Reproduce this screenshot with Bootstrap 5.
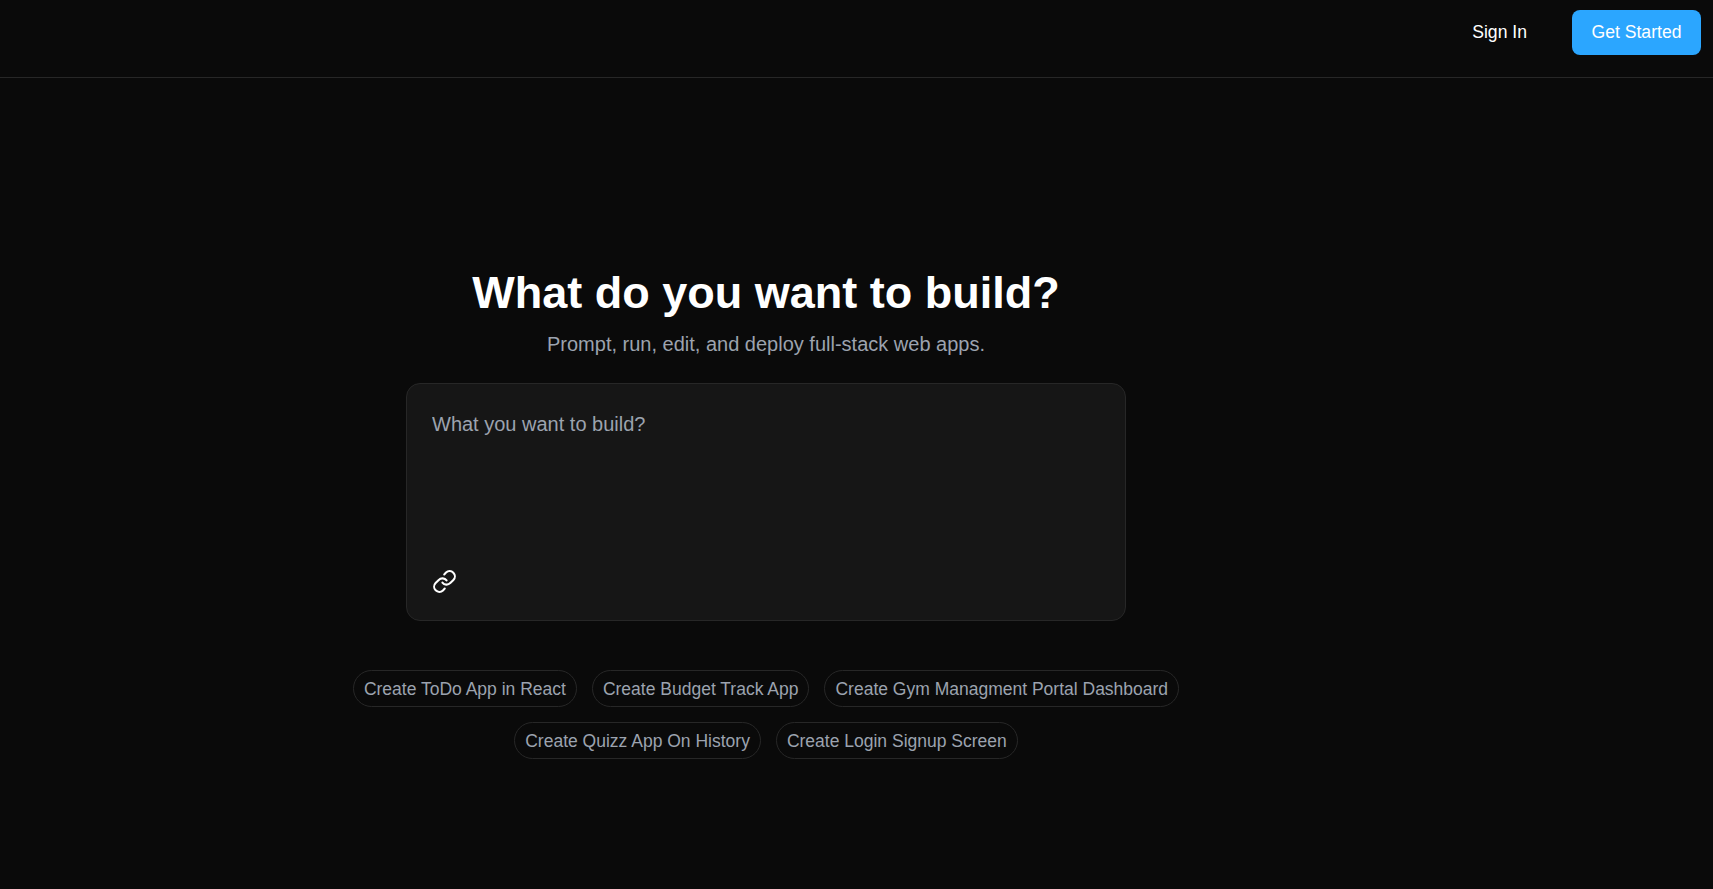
<!DOCTYPE html>
<html lang="en">
<head>
  <meta charset="UTF-8">
  <meta name="viewport" content="width=device-width, initial-scale=1.0">
  <title>Build</title>
  <link href="https://cdn.jsdelivr.net/npm/bootstrap@5.3.0/dist/css/bootstrap.min.css" rel="stylesheet">
  <style>
    body {
      background-color: #0a0a0a;
      color: #fff;
      font-family: "Liberation Sans", Arial, sans-serif;
      min-height: 100vh;
    }
    .top-bar {
      height: 78px;
      padding: 10px 12px 0 0;
      border-bottom: 1px solid #272727;
      align-items: flex-start;
      gap: 25px;
    }
    .btn-signin {
      color: #fff;
      font-size: 17.6px;
      height: 45px;
      padding: 0 20px;
      border: 0;
    }
    .btn-start {
      background-color: #2ba6ff;
      color: #fff;
      font-size: 17.6px;
      height: 45px;
      width: 129px;
      padding: 0;
      border: 0;
      border-radius: 8px;
    }
    .hero {
      padding: 190px 181px 0 0;
    }
    .hero-title {
      font-size: 45px;
      font-weight: 700;
      line-height: 50px;
      margin-bottom: 12px;
    }
    .hero-sub {
      color: #9ca3af;
      font-size: 20px;
      line-height: 28px;
      margin-bottom: 25px;
    }
    .prompt-box {
      width: 720px;
      height: 238px;
      background-color: #161616;
      border: 1px solid #272727;
      border-radius: 14px;
      padding: 26px 24px 24px 25px;
    }
    .prompt-input {
      background: transparent;
      color: #fff;
      border: 0;
      outline: 0;
      resize: none;
      width: 100%;
      height: 150px;
      padding: 0;
      font-size: 20px;
      line-height: 28px;
    }
    .prompt-input::placeholder {
      color: #9ca3af;
      opacity: 1;
    }
    .prompt-icon {
      display: block;
      margin-top: 9px;
      color: #fff;
    }
    .idea-list {
      width: 860px;
      margin-top: 49px;
      gap: 15px;
    }
    .idea-chip {
      background: transparent;
      color: #9ca3af;
      border: 1px solid #272727;
      border-radius: 999px;
      font-size: 17.5px;
      line-height: 26px;
      padding: 5px 10px;
      height: 37px;
    }
  </style>
</head>
<body>
  <header class="top-bar d-flex justify-content-end">
    <button type="button" class="btn btn-signin">Sign In</button>
    <button type="button" class="btn btn-start">Get Started</button>
  </header>

  <main class="hero d-flex flex-column align-items-center text-center">
    <h1 class="hero-title">What do you want to build?</h1>
    <p class="hero-sub">Prompt, run, edit, and deploy full-stack web apps.</p>

    <div class="prompt-box text-start">
      <textarea class="prompt-input d-block" placeholder="What you want to build?"></textarea>
      <svg class="prompt-icon" width="25" height="25" viewBox="0 0 24 24" fill="none" stroke="currentColor" stroke-width="2" stroke-linecap="round" stroke-linejoin="round">
        <path d="M10 13a5 5 0 0 0 7.54.54l3-3a5 5 0 0 0-7.07-7.07l-1.72 1.71"/>
        <path d="M14 11a5 5 0 0 0-7.54-.54l-3 3a5 5 0 0 0 7.07 7.07l1.71-1.71"/>
      </svg>
    </div>

    <div class="idea-list d-flex flex-wrap justify-content-center">
      <button type="button" class="idea-chip">Create ToDo App in React</button>
      <button type="button" class="idea-chip">Create Budget Track App</button>
      <button type="button" class="idea-chip">Create Gym Managment Portal Dashboard</button>
      <button type="button" class="idea-chip">Create Quizz App On History</button>
      <button type="button" class="idea-chip">Create Login Signup Screen</button>
    </div>
  </main>

  <script src="https://cdn.jsdelivr.net/npm/bootstrap@5.3.0/dist/js/bootstrap.bundle.min.js"></script>
</body>
</html>
